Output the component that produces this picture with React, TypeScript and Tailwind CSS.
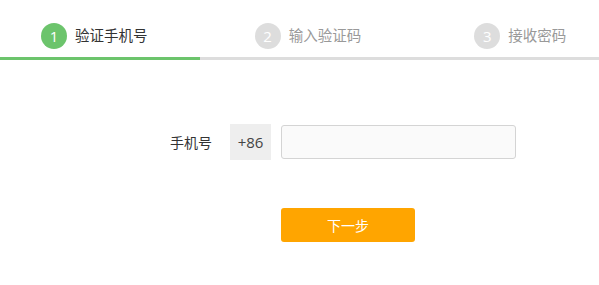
const font = { fontFamily: '"Open Sans", "Noto Sans CJK SC", sans-serif' };

const steps = [
  { n: 1, label: "验证手机号", offset: "pl-[41px]", active: true },
  { n: 2, label: "输入验证码", offset: "pl-[55px]", active: false },
  { n: 3, label: "接收密码", offset: "pl-[75px]", active: false },
];

export default function App() {
  return (
    <div className="w-[599px] h-[285px] bg-white text-[14px] text-[#333]" style={font}>
      {/* step bar */}
      <div className="grid grid-cols-3">
        {steps.map((s) => (
          <div
            key={s.n}
            className={`h-[60px] flex items-end pb-[8px] border-b-[3px] ${s.offset} ${
              s.active ? "border-[#6cc46c]" : "border-[#dddddd]"
            }`}
          >
            <div className="flex items-center gap-[8px]">
              <span
                className={`w-[26px] h-[26px] rounded-full flex items-center justify-center text-white text-[15px] ${
                  s.active ? "bg-[#6cc46c]" : "bg-[#dddddd]"
                }`}
              >
                {s.n}
              </span>
              <span className={`text-[14.5px] ${s.active ? "text-[#333]" : "text-[#999]"}`}>{s.label}</span>
            </div>
          </div>
        ))}
      </div>

      {/* phone row */}
      <div className="flex items-center mt-[64px] pl-[170px]">
        <span className="w-[60px]">手机号</span>
        <span className="w-[41px] h-[36px] bg-[#eeeeee] flex items-center justify-center text-[15px] text-[#444]">
          +86
        </span>
        <input
          type="text"
          className="ml-[10px] w-[235px] h-[34px] rounded-[3px] border border-[#d4d4d4] bg-[#fafafa] outline-none px-2"
        />
      </div>

      {/* next button */}
      <div className="pl-[281px] mt-[48px]">
        <button className="w-[134px] h-[34px] rounded-[3px] bg-[#ffa500] text-white text-[14px]">
          下一步
        </button>
      </div>
    </div>
  );
}
